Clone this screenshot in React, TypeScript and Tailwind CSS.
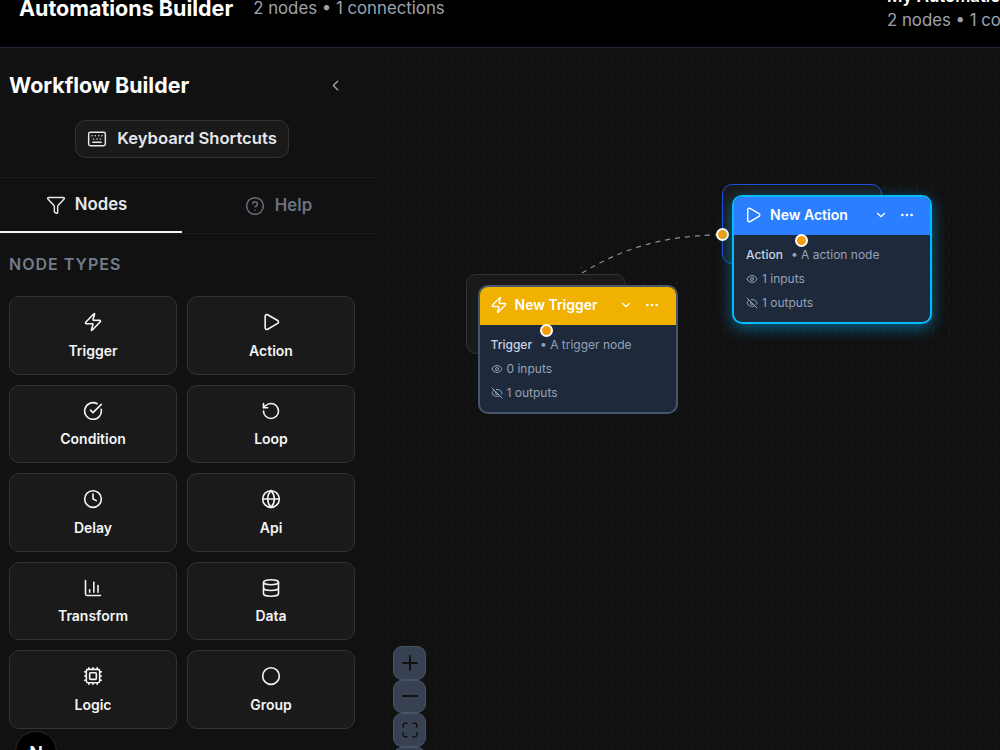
import {
  ChevronDown,
  ChevronLeft,
  CircleCheckBig,
  CircleHelp,
  Circle,
  ChartColumn,
  Clock,
  Cpu,
  Database,
  Ellipsis,
  Eye,
  EyeOff,
  Filter,
  Globe,
  Keyboard,
  Maximize,
  Minus,
  Play,
  Plus,
  RotateCcw,
  Zap,
} from "lucide-react";

const nodeTypes = [
  { label: "Trigger", icon: Zap },
  { label: "Action", icon: Play },
  { label: "Condition", icon: CircleCheckBig },
  { label: "Loop", icon: RotateCcw },
  { label: "Delay", icon: Clock },
  { label: "Api", icon: Globe },
  { label: "Transform", icon: ChartColumn },
  { label: "Data", icon: Database },
  { label: "Logic", icon: Cpu },
  { label: "Group", icon: Circle },
];

const Handle = ({ className }: { className: string }) => (
  <span className={`absolute h-[13px] w-[13px] rounded-full border-2 border-white bg-[#f59e0b] ${className}`} />
);

export default function App() {
  return (
    <div className="relative flex h-[750px] w-[1000px] flex-col overflow-hidden bg-[#111111] font-['Inter',sans-serif] text-white">
      {/* Header */}
      <header className="flex h-[48px] shrink-0 justify-between overflow-hidden border-b border-[#1f2937] bg-black pl-[19px]">
        <div className="flex h-[16px] items-center gap-[20px]">
          <h1 className="text-[21.5px] leading-[28px] font-bold whitespace-nowrap">Automations Builder</h1>
          <span className="pt-[1px] text-[16.8px] whitespace-nowrap text-[#9ca3af]">2 nodes • 1 connections</span>
        </div>
        <div className="-mt-[16px] w-[113px] overflow-hidden whitespace-nowrap">
          <div className="text-[16.8px] leading-[24px] font-semibold">My Automations</div>
          <div className="text-[16.8px] leading-[24px] text-[#9ca3af]">2 nodes • 1 connections</div>
        </div>
      </header>

      <div className="flex min-h-0 flex-1">
        {/* Sidebar */}
        <aside className="flex w-[375px] shrink-0 flex-col">
          <div className="flex h-[130px] shrink-0 flex-col border-b border-[#1c1c1c]">
            <div className="flex h-[72px] items-center justify-between pt-[2px] pr-[31px] pl-[9px]">
              <h2 className="text-[21.4px] font-bold">Workflow Builder</h2>
              <ChevronLeft className="h-[17px] w-[17px] text-[#9ca3af]" />
            </div>
            <div className="flex justify-center pr-[11px]">
              <button className="flex h-[38px] w-[214px] items-center justify-center gap-[10px] rounded-[10px] border border-[#333333] bg-[#1a1a1a] pb-[1px] text-[16.6px] font-semibold text-[#e5e7eb]">
                <Keyboard className="h-[20px] w-[20px]" strokeWidth={1.75} />
                Keyboard Shortcuts
              </button>
            </div>
          </div>

          <div className="flex h-[56px] shrink-0 border-b border-[#1c1c1c]">
            <div className="flex w-[182px] items-center justify-center gap-[9px] border-b-2 border-[#f3f4f6] pr-[9px] text-[16.8px] font-semibold text-[#e5e7eb]">
              <Filter className="h-[20px] w-[20px]" strokeWidth={1.75} />
              Nodes
            </div>
            <div className="flex w-[182px] items-center justify-center gap-[10px] pl-[11px] text-[16.8px] font-semibold text-[#6b7280]">
              <CircleHelp className="h-[20px] w-[20px]" strokeWidth={1.75} />
              Help
            </div>
          </div>

          <div className="px-[9px] pt-[20px]">
            <h3 className="text-[16px] leading-[20px] font-semibold tracking-[1px] text-[#737d8c]">NODE TYPES</h3>
            <div className="mt-[22px] grid w-[346px] grid-cols-2 gap-x-[10px] gap-y-[10px]">
              {nodeTypes.map(({ label, icon: Icon }) => (
                <div
                  key={label}
                  className="flex h-[78.5px] flex-col items-center gap-[8.5px] rounded-[10px] border border-[#333333] bg-[#1a1a1a] pt-[15px]"
                >
                  <Icon className="h-[20px] w-[20px] text-[#f3f4f6]" strokeWidth={1.9} />
                  <span className="text-[14px] leading-[20px] font-semibold text-[#f3f4f6]">{label}</span>
                </div>
              ))}
            </div>
          </div>
        </aside>

        {/* Canvas */}
        <main className="relative flex-1 bg-[radial-gradient(ellipse_1px_2.5px,#1e1e1e_40%,transparent_100%)] bg-[length:16px_16px] bg-[position:6px_3px]">
          <svg className="absolute inset-0 h-full w-full" fill="none">
            <path d="M207 225 C 245 202, 285 188, 341 187" stroke="#8b8f96" strokeWidth="1.2" strokeDasharray="5 5" />
          </svg>

          {/* Trigger node */}
          <div className="absolute top-[226px] left-[91px] h-[80px] w-[160px] rounded-[10px] border border-[#333333] bg-[#1a1a1a]" />
          <div className="absolute top-[237px] left-[102.5px] w-[200px] rounded-[10px] border-2 border-[#475569] bg-[#1e293b]">
            <div className="flex h-[38px] items-center rounded-t-[8px] bg-[#f0b100] pr-[16px] pb-[3px] pl-[10px]">
              <Zap className="h-[18px] w-[18px]" strokeWidth={1.9} />
              <span className="ml-[7px] flex-1 text-[14px] font-semibold">New Trigger</span>
              <ChevronDown className="h-[14px] w-[14px]" />
              <Ellipsis className="ml-[11px] h-[16px] w-[16px]" />
            </div>
            <div className="h-[87px] px-[11px] pt-[8px] text-[12px] leading-[24px] text-[#94a3b8]">
              <div>
                <span className="font-medium text-[#cbd5e1]">Trigger</span>
                <span className="ml-[8px]">• A trigger node</span>
              </div>
              <div className="flex items-center gap-[4px]">
                <Eye className="h-[12px] w-[12px]" />
                0 inputs
              </div>
              <div className="flex items-center gap-[4px]">
                <EyeOff className="h-[12px] w-[12px]" />
                1 outputs
              </div>
            </div>
            <Handle className="top-[37px] left-[60px]" />
          </div>

          {/* Action node */}
          <div className="absolute top-[136px] left-[347px] h-[80px] w-[160px] rounded-[10px] border border-[#1d4ed8] bg-[#1a1a1a]" />
          <Handle className="top-[180px] left-[341px]" />
          <div className="absolute top-[147px] left-[357px] w-[200px] rounded-[10px] border-2 border-[#00bcff] bg-[#1e293b] shadow-[0_4px_16px_rgba(0,180,255,0.5)]">
            <div className="flex h-[38px] items-center rounded-t-[8px] bg-[#2b7fff] pr-[15px] pb-[3px] pl-[10px]">
              <Play className="h-[18px] w-[18px]" strokeWidth={1.9} />
              <span className="ml-[8px] flex-1 text-[14px] font-semibold">New Action</span>
              <ChevronDown className="h-[14px] w-[14px]" />
              <Ellipsis className="ml-[11px] h-[16px] w-[16px]" />
            </div>
            <div className="h-[87px] px-[12px] pt-[8px] text-[12px] leading-[24px] text-[#94a3b8]">
              <div>
                <span className="font-medium text-[#cbd5e1]">Action</span>
                <span className="ml-[8px]">• A action node</span>
              </div>
              <div className="flex items-center gap-[4px]">
                <Eye className="h-[12px] w-[12px]" />
                1 inputs
              </div>
              <div className="flex items-center gap-[4px]">
                <EyeOff className="h-[12px] w-[12px]" />
                1 outputs
              </div>
            </div>
            <Handle className="top-[37px] left-[61px]" />
          </div>

          {/* Zoom controls */}
          <div className="absolute top-[598px] left-[18px] flex flex-col text-[#111111]">
            <button className="flex h-[33.5px] w-[33px] items-center justify-center rounded-[9px] border border-[#475569] bg-[#374151]">
              <Plus className="h-[24px] w-[24px]" />
            </button>
            <button className="flex h-[33.5px] w-[33px] items-center justify-center rounded-[9px] border border-[#475569] bg-[#374151]">
              <Minus className="h-[24px] w-[24px]" />
            </button>
            <button className="flex h-[33.5px] w-[33px] items-center justify-center rounded-[9px] border border-[#475569] bg-[#374151]">
              <Maximize className="h-[18px] w-[18px]" />
            </button>
            <button className="h-[33.5px] w-[33px] rounded-[9px] border border-[#475569] bg-[#374151]" />
          </div>
        </main>
      </div>

      {/* Dev badge */}
      <div className="absolute top-[731px] left-[15px] flex h-[42px] w-[42px] items-start justify-center rounded-full border border-[#262626] bg-black pt-[12px] text-[18px] leading-[20px] font-semibold">
        N
      </div>
    </div>
  );
}
